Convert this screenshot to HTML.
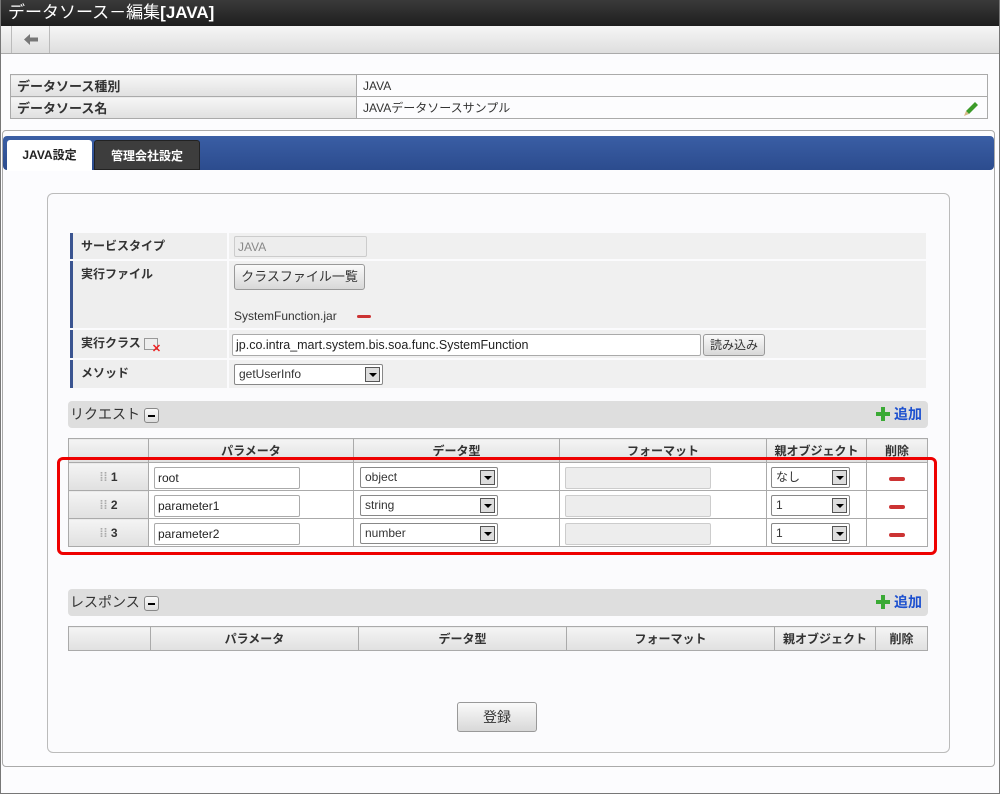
<!DOCTYPE html>
<html><head><meta charset="utf-8"><style>
*{box-sizing:border-box;margin:0;padding:0}
body{width:1000px;height:794px;position:relative;background:#fcfcfe;font-family:"Liberation Sans","Noto Sans CJK JP",sans-serif;font-size:12px;color:#333;overflow:hidden}
.a{position:absolute}
.title{left:0;top:0;width:1000px;height:26px;background:linear-gradient(#3a3a3a,#1e1e1e);color:#fff;font-size:17px;padding:2px 8px;line-height:22px}
.tool{left:0;top:26px;width:1000px;height:28px;background:linear-gradient(#f6f6f6,#dedede);border-bottom:1px solid #aaa}
.back{left:11px;top:0;width:39px;height:27px;border-left:1px solid #bbb;border-right:1px solid #bbb}
table{border-collapse:collapse}
.info td{border:1px solid #aaa;height:22px;padding:0 6px;font-size:13px}
.info td.h{background:linear-gradient(#f6f6f6,#e0e0e0);font-weight:bold;width:346px}
.frame{left:2px;top:130px;width:993px;height:637px;border:1px solid #aaa;border-radius:4px;background:#fcfcfe}
.tabbar{left:3px;top:136px;width:991px;height:34px;background:linear-gradient(#3a5ea5,#2c4c8e);border-radius:4px}
.tab{top:140px;height:30px;border-radius:3px 3px 0 0;font-weight:bold;font-size:12px;line-height:30px;text-align:center}
.panel{left:47px;top:193px;width:903px;height:560px;border:1px solid #bbb;border-radius:6px;background:#fbfbfd}
.lab{left:70px;width:157px;background:#eeeeee;border-left:3px solid #3a5490;font-weight:bold;font-size:12px;padding:4px 8px}
.val{left:229px;width:697px;background:#f0f0f0}
.inp{background:#fff;border:1px solid #aaa;border-radius:2px;height:22px;font-size:12px;line-height:20px;padding-left:3px;color:#222}
.btn{background:linear-gradient(#fafafa,#d8d8d8);border:1px solid #999;border-radius:3px;text-align:center}
.sel{background:#fff;border:1px solid #888;border-radius:2px;height:21px;line-height:19px;padding-left:4px;font-size:12px}
.sel i{position:absolute;right:2px;top:2px;width:15px;height:15px;border:1px solid #555;background:#ddd}
.sel i:after{content:"";position:absolute;left:3px;top:5px;border:4px solid transparent;border-top:4px solid #000;border-bottom:0}
.bar{left:68px;width:860px;height:27px;background:#dedede;border-radius:4px;font-size:14px;padding-left:2px;line-height:27px}
.mini{display:inline-block;width:15px;height:15px;border:1px solid #888;border-radius:3px;background:linear-gradient(#fafafa,#ddd);vertical-align:middle;position:relative;margin-left:4px}
.mini:after{content:"";position:absolute;left:3px;top:6px;width:7px;height:2px;background:#000}
.add{right:6px;top:0;color:#1b4fcf;font-size:14px;font-weight:bold}
.grid td{border:1px solid #aaa;height:24px;text-align:center;font-size:12px;font-weight:bold}
.grid thead td{background:linear-gradient(#f4f4f4,#e0e0e0)}
.grid tbody td{height:28px;background:#fff}
.grid tbody td.n{background:linear-gradient(#f4f4f4,#e0e0e0);color:#333}
.grid tbody .inp{text-align:left;font-weight:normal}
.minus{display:inline-block;width:16px;height:4px;background:#c33;border-radius:2px}
.plus{position:absolute;right:38px;top:6px;width:14px;height:14px}
.plus:before{content:"";position:absolute;left:5px;top:0;width:4px;height:14px;background:#3aaa35}
.plus:after{content:"";position:absolute;left:0;top:5px;width:14px;height:4px;background:#3aaa35}
</style></head><body>
<div class="a title">データソース－編集<b>[JAVA]</b></div>
<div class="a tool"><div class="a back"><svg style="position:absolute;left:12px;top:8px" width="14" height="11" viewBox="0 0 14 11"><path d="M0 5.5 L6 0 L6 3.5 L14 3.5 L14 7.5 L6 7.5 L6 11 Z" fill="#777"/></svg></div></div>
<table class="a info" style="left:10px;top:74px;width:978px">
<tr><td class="h">データソース種別</td><td style="font-size:12px">JAVA</td></tr>
<tr><td class="h">データソース名</td><td style="font-size:12px;position:relative">JAVAデータソースサンプル<svg style="position:absolute;right:7px;top:2px" width="18" height="18" viewBox="0 0 18 18"><path d="M4 12 L13 3 L16 6 L7 15 Z" fill="#3c9b2a"/><path d="M4 12 L7 15 L2 17 Z" fill="#d9b98a"/></svg></td></tr>
</table>
<div class="a frame"></div>
<div class="a tabbar"></div>
<div class="a tab" style="left:7px;width:85px;background:#fff;color:#222;height:31px">JAVA設定</div>
<div class="a tab" style="left:94px;width:106px;background:#3d3d3d;color:#fff;border:1px solid #222">管理会社設定</div>
<div class="a panel"></div>

<div class="a lab" style="top:233px;height:26px">サービスタイプ</div>
<div class="a val" style="top:233px;height:26px"><div class="a inp" style="left:5px;top:3px;width:133px;height:21px;background:#ededed;border-color:#ccc;color:#888">JAVA</div></div>
<div class="a lab" style="top:261px;height:67px">実行ファイル</div>
<div class="a val" style="top:261px;height:67px"><div class="a btn" style="left:5px;top:3px;width:131px;height:26px;line-height:24px;font-size:13px">クラスファイル一覧</div><div class="a" style="left:5px;top:48px">SystemFunction.jar</div><span class="a minus" style="left:128px;top:54px;width:14px;height:3px"></span></div>
<div class="a lab" style="top:330px;height:28px">実行クラス <span style="display:inline-block;width:14px;height:12px;border:1px solid #999;background:#eee;vertical-align:middle;position:relative"><b style="position:absolute;right:-4px;bottom:-6px;color:#e22;font-size:11px">✕</b></span></div>
<div class="a val" style="top:330px;height:28px"><div class="a inp" style="left:3px;top:4px;width:469px;font-size:12.5px">jp.co.intra_mart.system.bis.soa.func.SystemFunction</div><div class="a btn" style="left:474px;top:4px;width:62px;height:22px;line-height:20px">読み込み</div></div>
<div class="a lab" style="top:360px;height:28px">メソッド</div>
<div class="a val" style="top:360px;height:28px"><div class="a sel" style="left:5px;top:4px;width:149px">getUserInfo<i></i></div></div>

<div class="a bar" style="top:401px">リクエスト<span class="mini"></span><div class="a add">追加</div><span class="plus"></span></div>
<table class="a grid" style="left:68px;top:438px;width:860px">
<thead><tr><td style="width:80px"></td><td style="width:205px">パラメータ</td><td style="width:206px">データ型</td><td style="width:207px">フォーマット</td><td style="width:100px">親オブジェクト</td><td>削除</td></tr></thead>
<tbody>
<tr><td class="n"><span style="color:#aaa">⁞⁞</span>&nbsp;1</td><td style="position:relative"><div class="a inp" style="left:5px;top:4px;width:146px">root</div></td><td style="position:relative"><div class="a sel" style="left:6px;top:4px;width:138px;text-align:left;font-weight:normal">object<i></i></div></td><td style="position:relative"><div class="a inp" style="left:5px;top:4px;width:146px;background:#ededed;border-color:#ccc"></div></td><td style="position:relative"><div class="a sel" style="left:4px;top:4px;width:79px;text-align:left;font-weight:normal">なし<i></i></div></td><td><span class="minus"></span></td></tr>
<tr><td class="n"><span style="color:#aaa">⁞⁞</span>&nbsp;2</td><td style="position:relative"><div class="a inp" style="left:5px;top:4px;width:146px">parameter1</div></td><td style="position:relative"><div class="a sel" style="left:6px;top:4px;width:138px;text-align:left;font-weight:normal">string<i></i></div></td><td style="position:relative"><div class="a inp" style="left:5px;top:4px;width:146px;background:#ededed;border-color:#ccc"></div></td><td style="position:relative"><div class="a sel" style="left:4px;top:4px;width:79px;text-align:left;font-weight:normal">1<i></i></div></td><td><span class="minus"></span></td></tr>
<tr><td class="n"><span style="color:#aaa">⁞⁞</span>&nbsp;3</td><td style="position:relative"><div class="a inp" style="left:5px;top:4px;width:146px">parameter2</div></td><td style="position:relative"><div class="a sel" style="left:6px;top:4px;width:138px;text-align:left;font-weight:normal">number<i></i></div></td><td style="position:relative"><div class="a inp" style="left:5px;top:4px;width:146px;background:#ededed;border-color:#ccc"></div></td><td style="position:relative"><div class="a sel" style="left:4px;top:4px;width:79px;text-align:left;font-weight:normal">1<i></i></div></td><td><span class="minus"></span></td></tr>
</tbody></table>
<div class="a" style="left:57px;top:457px;width:880px;height:98px;border:3px solid #e00;border-radius:6px"></div>

<div class="a bar" style="top:589px">レスポンス<span class="mini"></span><div class="a add">追加</div><span class="plus"></span></div>
<table class="a grid" style="left:68px;top:626px;width:860px">
<thead><tr><td style="width:82px"></td><td style="width:208px">パラメータ</td><td style="width:208px">データ型</td><td style="width:208px">フォーマット</td><td style="width:101px">親オブジェクト</td><td>削除</td></tr></thead></table>
<div class="a btn" style="left:457px;top:702px;width:80px;height:30px;line-height:28px;font-size:14px">登録</div>
<div class="a" style="left:0;top:0;width:1000px;height:794px;border:1px solid #777;border-top:0"></div>
</body></html>
